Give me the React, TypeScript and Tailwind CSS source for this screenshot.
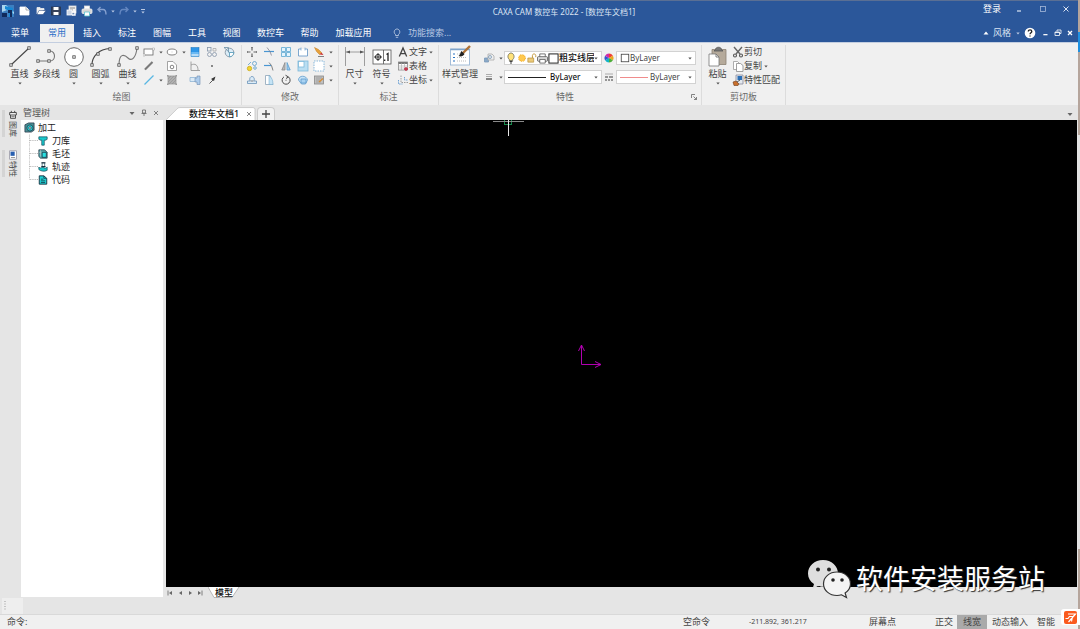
import React from 'react';

type Kids = { children?: React.ReactNode };

function Icon({ children, size = 'size-3', box = '0 0 12 12' }: Kids & { size?: string; box?: string }) {
  return (
    <svg viewBox={box} className={`${size} shrink-0`} fill="none" stroke="#666" strokeWidth="0.8" aria-hidden="true">
      {children}
    </svg>
  );
}

function Caret({ light = false }: { light?: boolean }) {
  return (
    <svg viewBox="0 0 4 3" className="h-[3px] w-1 shrink-0" fill={light ? '#b9c8e2' : '#555'} aria-hidden="true">
      <path d="M0.3 0.5h3.4L2 2.6z" />
    </svg>
  );
}

function Node({ x, y }: { x: number; y: number }) {
  return <rect x={x - 1.2} y={y - 1.2} width="2.4" height="2.4" fill="#fff" stroke="#444" strokeWidth="0.8" />;
}

function Group({ title, width, children, launcher = false }: Kids & { title: string; width: string; launcher?: boolean }) {
  return (
    <section aria-label={title} className={`${width} flex shrink-0 flex-col border-r border-[#dcdcdc]`}>
      <div className="flex h-[46px] items-start">{children}</div>
      <div className="flex h-3 items-center">
        <h2 className="flex-1 text-center text-[9px] leading-3 text-[#6a6a6a]">{title}</h2>
        {launcher && (
          <button aria-label="特性设置" className="mr-1">
            <Icon size="size-[6px]" box="0 0 6 6">
              <path d="M0.5 4V0.5H4M2.5 2.5l3 3M5.5 3v2.5H3" />
            </Icon>
          </button>
        )}
      </div>
    </section>
  );
}

function BigTool({ label, children, caret = true, width = 'w-[27px]' }: Kids & { label: string; caret?: boolean; width?: string }) {
  return (
    <button className={`${width} flex shrink-0 flex-col items-center whitespace-nowrap`}>
      <Icon size="size-[22px]" box="0 0 22 22">{children}</Icon>
      <span className="text-[9px] leading-[14px] text-[#444]">{label}</span>
      <span className="flex h-[5px] items-center">{caret && <Caret />}</span>
    </button>
  );
}

function SmallTool({ label, children, caret = false }: Kids & { label: string; caret?: boolean }) {
  return (
    <button aria-label={label} className="flex h-[14px] items-center gap-1">
      <Icon>{children}</Icon>
      {caret && <Caret />}
    </button>
  );
}

function TextTool({ label, children, caret = false }: Kids & { label: string; caret?: boolean }) {
  return (
    <button className="flex h-[14px] items-center whitespace-nowrap text-[9px] leading-[14px] text-[#444]">
      <Icon>{children}</Icon>
      <span>{label}</span>
      {caret && <span className="ml-[2px] flex"><Caret /></span>}
    </button>
  );
}

function Combo({ label, value, children, bold = false, latin = false, width }: Kids & { label: string; value: string; bold?: boolean; latin?: boolean; width: string }) {
  return (
    <div className={`${width} flex h-[14px] shrink-0 items-center border border-[#d2d2d2] bg-white pr-[3px]`}>
      {children}
      <select
        aria-label={label}
        className={`min-w-0 flex-1 appearance-none bg-transparent leading-3 outline-none ${latin ? 'text-[8px]' : 'text-[9px]'} ${bold ? 'font-medium text-[#111]' : 'text-[#444]'}`}
      >
        <option>{value}</option>
      </select>
      <Caret />
    </div>
  );
}

function TitleBar() {
  return (
    <header className="flex h-6 items-center border-t border-[#5a6f94] px-[2px] pb-[3px]">
      <svg viewBox="0 0 12 12" className="size-3" aria-hidden="true">
        <rect width="12" height="12" fill="#3d7fc0" />
        <path d="M0 0h4l8 7v2L5 5 0 7z" fill="#a9d6ef" />
        <path d="M3 1l8 2-1 9H7V6L3 4z" fill="#1688d4" />
        <path d="M6 5h4v7H8V8H6zM0 8h5v4H0z" fill="#102a5c" />
      </svg>
      <div className="ml-[5px] flex items-center gap-[3px]">
        <button aria-label="新建"><Icon><path d="M1 2h6l3 3v5H1z" fill="#fff" stroke="#fff" /><path d="M7 2v3h3" stroke="#999" /></Icon></button>
        <button aria-label="打开" className="ml-px"><Icon><path d="M2 9V2.5h3l1 1h3V5" fill="#eee" stroke="#eee" /><path d="M2 9.5l2-4h7l-3 4z" fill="#fff" stroke="#26457a" strokeWidth="0.5" /></Icon></button>
        <button aria-label="保存"><Icon><rect x="1.5" y="2" width="9" height="8" fill="#37435c" stroke="#26334d" /><path d="M3.5 2h5v3h-5zM3.5 7h5v3h-5z" fill="#fff" stroke="none" /></Icon></button>
        <button aria-label="另存为" className="ml-px"><Icon><rect x="3" y="1" width="7" height="7" fill="#f6f6f6" stroke="#ddd" /><path d="M4 3h5M4 5h3" /><rect x="1" y="5" width="5" height="5" fill="#cfd8e6" stroke="#fff" /><path d="M9 6v4H6" stroke="#fff" strokeWidth="1.4" /></Icon></button>
        <button aria-label="打印"><Icon><rect x="3.5" y="1" width="5" height="3" fill="#fff" stroke="#ddd" /><rect x="1" y="4" width="10" height="4.5" rx="1" fill="#d6d6d6" stroke="#eee" /><path d="M3.5 7h5v4h-5z" fill="#fff" stroke="#5ac2cf" /></Icon></button>
        <button className="flex items-center gap-[3px]" aria-label="撤销"><Icon><path d="M4.5 2L2 4.5 4.5 7M2 4.5h5c3 0 3 3 3 5" stroke="#86a1d0" strokeWidth="1.4" /></Icon><Caret light /></button>
        <button className="flex items-center gap-[3px]" aria-label="重做"><Icon><path d="M7.5 2L10 4.5 7.5 7M10 4.5H5c-3 0-3 3-3 5" stroke="#6487c0" strokeWidth="1.4" /></Icon><Caret light /></button>
        <button className="ml-px flex flex-col items-center gap-px" aria-label="自定义快速访问工具栏"><span className="h-px w-1 bg-[#b9c8e2]" /><Caret light /></button>
      </div>
      <h1 className="flex-1 pt-[2px] text-center text-[8px] leading-3 whitespace-nowrap text-[#dbe4f3]">CAXA CAM 数控车 2022 - [数控车文档1]</h1>
      <div className="flex items-center pr-1 pb-1">
        <button className="mr-3 text-[9px] leading-3 text-white">登录</button>
        <button aria-label="最小化" className="mr-3"><Icon><path d="M4 8h4" stroke="#dbe4f3" strokeWidth="1.2" /></Icon></button>
        <button aria-label="最大化" className="mr-[11px]"><Icon><rect x="3.5" y="3.5" width="5" height="5" stroke="#a7bada" /></Icon></button>
        <button aria-label="关闭"><Icon><path d="M3.5 3.5l5 5M8.5 3.5l-5 5" stroke="#dbe4f3" strokeWidth="1" /></Icon></button>
      </div>
    </header>
  );
}

function MenuTab({ label, width }: { label: string; width: string }) {
  return <button className={`${width} h-full shrink-0 text-center leading-[18px] whitespace-nowrap`}>{label}</button>;
}

function MenuBar() {
  return (
    <nav className="flex h-[18px] items-center text-[9px] text-white">
      <MenuTab label="菜单" width="w-10" />
      <button aria-current="page" className="h-full w-[34px] shrink-0 bg-[#f0f0f0] leading-[18px] text-[#2b6fc8]">常用</button>
      <MenuTab label="插入" width="w-9" />
      <MenuTab label="标注" width="w-[34px]" />
      <MenuTab label="图幅" width="w-9" />
      <MenuTab label="工具" width="w-[34px]" />
      <MenuTab label="视图" width="w-[35px]" />
      <MenuTab label="数控车" width="w-[43px]" />
      <MenuTab label="帮助" width="w-[35px]" />
      <MenuTab label="加载应用" width="w-[53px]" />
      <label className="ml-[11px] flex min-w-0 flex-1 items-center gap-[5px]">
        <Icon><path d="M4.5 8.5V7.5C2 5.5 3.5 2 6 2s4 3.5 1.500 5.500v1zM4.800 10.300h2.400" stroke="#c6d3e8" strokeWidth="0.8" /></Icon>
        <input aria-label="功能搜索" placeholder="功能搜索..." className="min-w-0 flex-1 bg-transparent leading-3 outline-none placeholder:text-[#b8c8e2]" />
      </label>
      <div className="flex items-center gap-1 pr-1">
        <button aria-label="折叠功能区"><Icon size="size-[6px]" box="0 0 6 6"><path d="M0.5 4.5L3 1.5l2.5 3z" fill="#fff" stroke="none" /></Icon></button>
        <button className="flex items-center gap-[5px] text-[#dbe4f3]">风格<Caret light /></button>
        <button aria-label="帮助">
          <svg viewBox="0 0 12 12" className="size-3" aria-hidden="true"><circle cx="6" cy="6" r="5.3" fill="#fff" /><path d="M4.300 4.600c0-2.400 3.500-2.200 3.500-.2C7.800 5.700 6 5.700 6 7.300M6 8.400v1.200" fill="none" stroke="#222" strokeWidth="1.3" /></svg>
        </button>
        <button aria-label="最小化文档"><Icon size="size-[10px]"><path d="M4 8h5" stroke="#fff" strokeWidth="1.5" /></Icon></button>
        <button aria-label="还原文档"><Icon size="size-2" box="0 0 8 8"><path d="M3 2.500V1h4v3.500H5.500M1 3h4.500v3.500H1zM1 3.500h4.500" stroke="#fff" /></Icon></button>
        <button aria-label="关闭文档"><Icon size="size-2" box="0 0 8 8"><path d="M2 2l4 4M6 2L2 6" stroke="#fff" strokeWidth="1.3" /></Icon></button>
      </div>
    </nav>
  );
}

function Ribbon() {
  return (
    <div className="flex h-[63px] overflow-hidden border-t border-[#c3cee0] bg-[#f0f0f0] pt-[2px] pl-[2px]">
      <Group title="绘图" width="w-[240px]">
        <div className="ml-1 flex w-[137px] shrink-0">
          <BigTool label="直线"><path d="M2 20L20 3" stroke="#444" strokeWidth="1.1" /><Node x={2} y={20} /><Node x={20} y={3} /></BigTool>
          <BigTool label="多段线" caret={false}><path d="M2 16h12c6 0 6-10 0-10" stroke="#777" strokeWidth="1.1" /><Node x={2} y={16} /><Node x={13} y={16} /><Node x={13} y={6} /></BigTool>
          <BigTool label="圆"><circle cx="11" cy="12" r="9.3" fill="#fff" stroke="#444" /><Node x={11} y={12} /></BigTool>
          <BigTool label="圆弧"><path d="M2 20C2 11 9 4 20 3.500" stroke="#444" strokeWidth="1.1" /><Node x={2} y={20} /><Node x={8} y={9} /><Node x={20} y={4} /></BigTool>
          <BigTool label="曲线"><path d="M2 20C2 7 8 10 11 13c4 4 8-1 9-10" stroke="#777" strokeWidth="1.1" /><Node x={2} y={20} /><Node x={20} y={3} /></BigTool>
        </div>
        <div className="grid shrink-0 grid-cols-[23px_23px_17px_17px_17px]">
          <SmallTool label="矩形" caret><rect x="1" y="3" width="9" height="6" fill="#fff" /><path d="M9.500 2h2v2h-2zM0 8h2v2H0z" fill="#fff" stroke="#999" strokeWidth="0.5" /></SmallTool>
          <SmallTool label="椭圆" caret><ellipse cx="6" cy="6" rx="4.8" ry="3" fill="#fff" /><path d="M6 5.500v1" stroke="#bbb" /></SmallTool>
          <SmallTool label="渐变填充"><rect x="2" y="1.500" width="8" height="9" fill="#2f97e8" stroke="#1670b8" strokeWidth="0.5" /><path d="M2.300 8h7.400v2.200H2.300z" fill="#b5dcf8" stroke="none" /><path d="M2.300 6h7.400v2H2.300z" fill="#6cb9f2" stroke="none" /></SmallTool>
          <SmallTool label="图库"><rect x="1.500" y="1.500" width="3.500" height="3.500" stroke="#8696aa" /><circle cx="3.500" cy="8.500" r="2" stroke="#8696aa" /><circle cx="8.500" cy="8.500" r="2" stroke="#8696aa" /><path d="M7 5V2.500h3V5z" stroke="#aaa" /></SmallTool>
          <SmallTool label="剖视图"><circle cx="6.500" cy="6.500" r="4.3" fill="#dcedf7" stroke="#7a8a9a" /><path d="M6.500 6.500h4.300a4.300 4.300 0 0 1-4.300 4.300z" fill="#fff" stroke="#4a95b6" /><path d="M1 1.500h4.500v5M1 1.500l5.500 5" stroke="#6a8fa6" /></SmallTool>
          <SmallTool label="双线"><path d="M2 9.500L9.500 2" stroke="#6a6a6a" strokeWidth="2" /><path d="M1.500 10l8-8" stroke="#aaa" strokeWidth="0.5" /></SmallTool>
          <SmallTool label="正多边形"><path d="M1.500 10.500v-9H7L10.500 5v5.500z" fill="#fff" stroke="#8d8d8d" /><circle cx="6" cy="7" r="1.8" /></SmallTool>
          <SmallTool label="公式曲线"><path d="M2 1.500v9h9M2 5c4-2 7 0 7 5" stroke="#8d8d8d" /></SmallTool>
          <SmallTool label="点"><circle cx="6" cy="6" r="0.9" fill="#555" stroke="none" /></SmallTool>
          <span />
          <SmallTool label="构造线" caret><path d="M1.500 10.500l9-9" stroke="#58b7e3" strokeWidth="1.2" /></SmallTool>
          <SmallTool label="剖面线"><rect x="2" y="2" width="8" height="8" fill="#b0b0b0" stroke="#999" /><path d="M2 5l3-3M2 8l6-6M3 10l7-7M6 10l4-4" stroke="#888" strokeWidth="0.5" /><path d="M1 1h1.500v1.500H1zM9.500 1H11v1.500H9.500zM1 9.500h1.500V11H1zM9.500 9.500H11V11H9.500z" fill="#999" stroke="none" /></SmallTool>
          <SmallTool label="局部放大"><path d="M1 3.500h6v4H1z" fill="#dbeaf6" stroke="#8fb4d4" /><path d="M6 4h2V2h3v8.500H8V8H6z" fill="#aecded" stroke="#6d8cae" strokeWidth="0.6" /></SmallTool>
          <SmallTool label="箭头"><path d="M3.500 9.500l4-4" stroke="#333" /><path d="M5 5l4.500-2.500L8 7z" fill="#333" stroke="none" /></SmallTool>
        </div>
      </Group>

      <Group title="修改" width="w-[97px]">
        <div className="ml-1 grid shrink-0 grid-cols-[17px_17px_17px_16px_22px]">
          <SmallTool label="平移"><path d="M6 1v3.500M6 7.500V11M1 6h3.500M7.500 6H11" stroke="#666" strokeWidth="1.2" /><path d="M5 2l1-1 1 1M5 10l1 1 1-1M2 5L1 6l1 1M10 5l1 1-1 1" stroke="#777" /></SmallTool>
          <SmallTool label="裁剪"><path d="M1 5.500h10" stroke="#4a96d2" strokeWidth="1.2" /><path d="M4 1.500l3 4 1.500 4" stroke="#778" strokeWidth="0.7" /></SmallTool>
          <SmallTool label="阵列"><path d="M1.500 1.500h4v4h-4zM6.500 1.500h4v4h-4zM1.500 6.500h4v4h-4zM6.500 6.500h4v4h-4z" fill="#e4f4fd" stroke="#5ba7d1" /></SmallTool>
          <SmallTool label="打断"><path d="M1.500 3v7h9V3" fill="#fff" stroke="#5f93c4" /><path d="M1.500 3h2.500M8 3h2.500" stroke="#5f93c4" /><path d="M4 1.500v3M8 1.500v3" stroke="#7aa8d2" /></SmallTool>
          <SmallTool label="删除" caret><path d="M1.500 1.500l4 2 3 3-2 2-3-3z" fill="#e7a13a" stroke="#bf7b20" strokeWidth="0.5" /><path d="M6.500 8.500l2-2 2 2.500z" fill="#c33" stroke="none" /><path d="M5 10.500h6" /></SmallTool>
          <SmallTool label="复制"><circle cx="3.500" cy="8.500" r="2.2" fill="#f3d433" stroke="#c9a91d" /><circle cx="8.500" cy="3.500" r="2" stroke="#5b9cca" /><circle cx="9" cy="8" r="1.3" stroke="#5b9cca" /><path d="M2 5l3-3" stroke="#5b9cca" /></SmallTool>
          <SmallTool label="延伸"><path d="M1 5.500h7" stroke="#4a96d2" strokeWidth="1.2" /><path d="M6 2.500l2.500 3 1.500 5" /></SmallTool>
          <SmallTool label="镜像"><path d="M5 2.500v7.500H1.800z" fill="#bbb" stroke="#888" /><path d="M7 2.500v7.500h3.200z" fill="#9dccf0" stroke="#5b9cca" /></SmallTool>
          <SmallTool label="缩放"><rect x="1" y="1" width="10" height="10" fill="#b9def2" stroke="#7db8da" /><rect x="1.500" y="1.500" width="5.500" height="5.500" fill="#fff" stroke="#7db8da" /></SmallTool>
          <SmallTool label="拉伸" caret><rect x="1" y="1" width="10" height="10" fill="#fff" stroke="#6da7d2" strokeDasharray="1.5 1" /></SmallTool>
          <SmallTool label="等距"><path d="M1.500 9.500h9V7H8c2-6-6-6-4 0H1.500z" fill="#dcecf8" stroke="#6a93b7" /><path d="M4.500 7h3" /></SmallTool>
          <SmallTool label="倒角"><path d="M2.500 10.500v-9H7l3 9z" fill="#fff" stroke="#8ba3b7" /><path d="M6 1.500c3 2 4 5 4 9H6z" fill="#c4e3f5" stroke="#6da7c9" strokeWidth="0.5" /></SmallTool>
          <SmallTool label="旋转"><path d="M4 2.800a4 4 0 1 0 4.500.2M8.500 3L5.500 1.200M8.500 3L6 4.500" stroke="#4a4a4a" strokeWidth="1" /><circle cx="6" cy="6.300" r="0.7" fill="#888" stroke="none" /></SmallTool>
          <SmallTool label="打散"><path d="M1.500 6c0-5 8-5 9 0l-2 4h-4z" fill="#c6e3f7" stroke="#5e9bcb" /><path d="M4 5h5v4H4z" fill="#a8d2f2" stroke="#5e9bcb" /></SmallTool>
          <SmallTool label="编辑" caret><rect x="1.500" y="2" width="9" height="8" fill="#c0c0c0" stroke="#888" /><path d="M3 4h6M3 6h4M3 8h5" stroke="#999" /><path d="M6 8l4-3.500" stroke="#d58c35" strokeWidth="1.4" /></SmallTool>
        </div>
      </Group>

      <Group title="标注" width="w-[100px]">
        <div className="ml-[2px] flex shrink-0">
          <BigTool label="尺寸"><path d="M1.500 2v19M20.500 2v19M1.500 7h19" stroke="#888" /><path d="M2 7l4-1.500v3zM20 7l-4-1.500v3z" fill="#555" stroke="none" /></BigTool>
          <BigTool label="符号"><rect x="2" y="5" width="18" height="14" fill="#fff" stroke="#555" /><path d="M12.500 5v14" stroke="#555" /><circle cx="7" cy="12" r="2.6" stroke="#222" strokeWidth="0.9" /><path d="M3 12h8M7 8v8" stroke="#222" strokeWidth="0.9" /><path d="M15.500 9.500l1.500-1v7.500M13.700 14.500v1.500" stroke="#222" strokeWidth="1.3" /></BigTool>
        </div>
        <div className="ml-[2px] flex flex-col">
          <TextTool label="文字" caret><path d="M2.300 10.500L6 2l3.700 8.500M3.600 7.700h4.800" stroke="#444" strokeWidth="1.3" /></TextTool>
          <TextTool label="表格"><rect x="1.500" y="2" width="9" height="8" fill="#fff" stroke="#888" /><path d="M1.500 3h9" stroke="#777" strokeWidth="2" /><path d="M1.500 6h9M1.500 8h9M4.500 3v7M7.500 3v7" stroke="#aaa" strokeWidth="0.6" /><path d="M9 7v4M7 9h4" stroke="#c22a43" strokeWidth="1.3" /></TextTool>
          <TextTool label="坐标" caret><path d="M4 1.500v7h7" stroke="#888" strokeDasharray="1.5 1" /><path d="M1.500 6v4h4M7.500 3v3h3" stroke="#4b8dcc" strokeDasharray="1.5 0.8" /></TextTool>
        </div>
      </Group>

      <Group title="特性" width="w-[263px]" launcher>
        <BigTool label="样式管理" width="w-[42px]"><rect x="1.500" y="4" width="19" height="16" fill="#fff" stroke="#8fafd0" /><path d="M1.500 4.500h19" stroke="#7da3ca" strokeWidth="1.5" /><path d="M4 9h2M4 12.500h2M4 16h2" stroke="#2873c4" strokeWidth="1.2" /><path d="M8 9h6M8 12.500h9M8 16h9" stroke="#aaa" strokeDasharray="1 1" /><path d="M21 1l-7 7" stroke="#ad7136" strokeWidth="2.4" /><path d="M12.500 6l3 3c-1 2-3.500 3-6 2 2-1 1.500-3.500 3-5z" fill="#222" stroke="none" /></BigTool>
        <div className="ml-[2px] flex flex-col gap-[5px] pt-[6px]">
          <div className="flex items-center gap-px">
            <SmallTool label="图层" caret><path d="M1.500 6h4v4h-4z" fill="#8aa9c8" stroke="#7998b7" /><path d="M5 8V2h4l2 2v4z" fill="#eee" stroke="#aaa" /><circle cx="7" cy="5" r="1.5" stroke="#7998b7" /></SmallTool>
            <Combo label="当前图层" value="粗实线层" width="w-[98px]" bold>
              <Icon><path d="M4.300 7.500C1.500 5 3.500 1 6 1s4.500 4 1.700 6.500v1H4.300z" fill="#ffe27a" stroke="#665" /><path d="M4.500 9.500h3M5 11h2" stroke="#444" strokeWidth="1.2" /></Icon>
              <Icon size="size-[10px]"><circle cx="6" cy="6" r="4" fill="#ffc94f" stroke="#f1ab24" strokeDasharray="1 1" strokeWidth="1.3" /></Icon>
              <Icon size="size-[10px]"><path d="M1 6h7v5H1z" fill="#ecca79" stroke="#b28d38" /><path d="M6.500 6V3c0-2.500 4-2.500 4 0v2" stroke="#c49a40" strokeWidth="1.2" /></Icon>
              <Icon size="size-[11px]"><path d="M3 4V1h6v3" fill="#fff" stroke="#444" /><rect x="0.500" y="4" width="11" height="5" rx="1" fill="#ddd" stroke="#444" /><path d="M3 7h6v4H3z" fill="#fff" stroke="#444" /></Icon>
              <Icon size="size-[11px]"><rect x="1" y="1" width="10" height="10" fill="#fff" stroke="#222" strokeWidth="1.1" /></Icon>
            </Combo>
            <button aria-label="颜色" className="flex w-3 justify-center">
              <svg viewBox="0 0 10 10" className="size-[10px]" aria-hidden="true">
                <path d="M5 5V.5A4.500 4.500 0 0 1 8.900 2.750z" fill="#ef4136" /><path d="M5 5L8.900 2.750a4.500 4.500 0 0 1 0 4.500z" fill="#e9a81e" /><path d="M5 5l3.900 2.250A4.500 4.500 0 0 1 5 9.500z" fill="#4dae39" /><path d="M5 5v4.500a4.500 4.500 0 0 1-3.900-2.250z" fill="#12b4c8" /><path d="M5 5L1.100 7.250a4.500 4.500 0 0 1 0-4.500z" fill="#3255cf" /><path d="M5 5L1.100 2.750A4.500 4.500 0 0 1 5 .5z" fill="#d22ba8" />
              </svg>
            </button>
            <Combo label="对象颜色" value="ByLayer" width="w-[80px]" latin><span className="ml-[3px] flex"><Icon size="size-[10px]"><rect x="1.500" y="1.500" width="9" height="9" fill="#fff" stroke="#444" strokeWidth="1" /></Icon></span></Combo>
          </div>
          <div className="flex items-center gap-px">
            <SmallTool label="线宽" caret><path d="M3 3.500h6M3 5.500h6" stroke="#999" /><path d="M3 8h6" stroke="#777" strokeWidth="1.8" /></SmallTool>
            <Combo label="对象线型" value="ByLayer" width="w-[98px]" bold latin>
              <svg viewBox="0 0 38 4" className="mr-1 ml-[3px] h-1 w-[38px] shrink-0" aria-hidden="true"><path d="M0 2.500h38" stroke="#222" strokeWidth="1" /></svg>
            </Combo>
            <button aria-label="线型"><Icon><path d="M2 3h8" stroke="#999" /><path d="M2 6h3M6 6h4" stroke="#777" strokeWidth="1.5" /><path d="M2 9h2M5 9h2M8 9h2" stroke="#777" strokeWidth="1.5" /></Icon></button>
            <Combo label="对象线宽" value="ByLayer" width="w-[80px]" latin>
              <svg viewBox="0 0 28 4" className="mr-[2px] ml-[3px] h-1 w-7 shrink-0" aria-hidden="true"><path d="M0 2.500h28" stroke="#f08c8c" strokeWidth="1" /></svg>
            </Combo>
          </div>
        </div>
      </Group>

      <Group title="剪切板" width="w-[84px]">
        <div className="ml-[2px] flex">
          <BigTool label="粘贴"><path d="M5 4.500h14v15H5z" fill="#b5aa9b" stroke="#8c8174" /><path d="M8.500 4.500c0-3 6-3 6 0l1.500 1.500H7z" fill="#777" stroke="#555" /><path d="M2 9h7l3 3v9H2z" fill="#fff" stroke="#777" /><path d="M9 9v3h3" /></BigTool>
        </div>
        <div className="ml-px flex flex-col">
          <TextTool label="剪切"><path d="M2 1l6 7M10 1L4 8" stroke="#666" strokeWidth="1.4" /><circle cx="3" cy="9.500" r="1.5" stroke="#555" strokeWidth="1.1" /><circle cx="9" cy="9.500" r="1.5" stroke="#555" strokeWidth="1.1" /></TextTool>
          <TextTool label="复制" caret><path d="M1.500 1.500h4l2 2v6h-6z" fill="#fff" stroke="#999" /><path d="M4.500 3.500h4l2.500 2v6H4.500z" fill="#fff" stroke="#888" /></TextTool>
          <TextTool label="特性匹配"><path d="M4 1h7v9H4z" fill="#e2e8ee" stroke="#889" /><rect x="5.500" y="2" width="4.500" height="4" fill="#2c6fb5" stroke="none" /><path d="M1 8l3-1 3 3-1 1.500H2z" fill="#c86f2c" stroke="#6f3c1c" strokeWidth="0.6" /><path d="M5 8l3-2" stroke="#333" /></TextTool>
        </div>
      </Group>
    </div>
  );
}

function SideTab({ label, children }: Kids & { label: string }) {
  return (
    <button className="flex w-full flex-col items-center gap-px border-l-[3px] border-[#d4d4d4] pr-[2px] pl-px">
      <Icon size="size-[10px]">{children}</Icon>
      <span className="text-[8px] leading-3 text-[#444] [text-orientation:sideways] [writing-mode:vertical-rl]">{label}</span>
    </button>
  );
}

function TreeItem({ label, children, last = false }: Kids & { label: string; last?: boolean }) {
  return (
    <li className="flex h-[13px] items-center">
      <svg viewBox="0 0 10 13" className="h-[13px] w-[9px]" fill="none" stroke="#aaa" strokeDasharray="1 1" aria-hidden="true">
        <path d={last ? 'M0.5 0v6.5' : 'M0.5 0v13'} /><path d="M1 6.5h9" />
      </svg>
      <Icon size="size-[10px]">{children}</Icon>
      <span className="ml-1">{label}</span>
    </li>
  );
}

function TreePanel() {
  return (
    <aside className="flex w-[142px] shrink-0 flex-col pb-px">
      <div className="flex h-[14px] items-center gap-1 pr-[3px] pl-[2px] text-[9px] leading-3 text-[#555]">
        <h2 className="flex-1">管理树</h2>
        <button aria-label="面板选项"><Icon size="size-2" box="0 0 8 8"><path d="M1.500 3h5L4 6z" fill="#666" stroke="none" /></Icon></button>
        <button aria-label="固定面板"><Icon size="size-2" box="0 0 8 8"><path d="M2.500 1h3v3h-3zM1.500 4.500h5M4 4.500V7" /></Icon></button>
        <button aria-label="关闭面板"><Icon size="size-2" box="0 0 8 8"><path d="M2 2l4 4M6 2L2 6" /></Icon></button>
      </div>
      <div className="flex-1 bg-white pt-px pl-[3px] text-[9px] leading-[13px] text-[#222]">
        <div className="flex h-[13px] items-center gap-[3px]">
          <Icon size="size-[11px]"><path d="M1 3l4-2h6v8l-3 2H1z" fill="#4b8f94" stroke="#234" /><circle cx="6.500" cy="6.500" r="3.4" fill="#27cfd3" stroke="#234" /><circle cx="6.500" cy="6.500" r="1.3" fill="#fff" stroke="#234" /></Icon>
          <span>加工</span>
        </div>
        <ul className="pl-[5px]">
          <TreeItem label="刀库"><path d="M1 1h10v3l-2 1H7.500v6h-3V5H3L1 4z" fill="#19c9cc" stroke="#145" /></TreeItem>
          <TreeItem label="毛坯"><path d="M1 1h7l3 3v7H3L1 9z" fill="#5aa9ad" stroke="#123" /><path d="M5 4h5v6H5z" fill="#28e0e2" stroke="#123" /><path d="M3 1v8M1 4h3" stroke="#ccc" strokeWidth="0.6" /></TreeItem>
          <TreeItem label="轨迹"><path d="M5 1h3v5H5z" fill="#fff" stroke="#145" /><path d="M1 6c2 3 4-1 6 1 2 1 3 0 4-1v4c-3 2-8 1-10-1z" fill="#19c9cc" stroke="#145" /><path d="M4 1h5M4 5.500h5" stroke="#123" strokeWidth="1.2" /></TreeItem>
          <TreeItem label="代码" last><path d="M1.500 1H7l3.500 3v7h-9z" fill="#1fd0d3" stroke="#123" strokeWidth="1" /><path d="M3.500 5h3M3.500 7h5M3.500 9h5M7 1v3h3" stroke="#123" /></TreeItem>
        </ul>
      </div>
    </aside>
  );
}

function Drawing() {
  return (
    <main className="flex min-w-0 flex-1 flex-col pr-px">
      <div className="flex h-[14px] items-end pr-1">
        <div className="relative flex h-[13px] w-[91px] shrink-0 items-center">
          <svg viewBox="0 0 92 13" className="absolute inset-0 size-full" aria-hidden="true"><path d="M0 13L11 2q1-1.500 3-1.500h74q2 0 2 2V13" fill="#fff" stroke="#bbb" strokeWidth="0.7" /></svg>
          <button className="relative ml-[23px] flex-1 text-left text-[9px] leading-3 font-medium whitespace-nowrap text-[#111]">数控车文档1</button>
          <button aria-label="关闭文档标签" className="relative mr-[4px]"><Icon size="size-2" box="0 0 8 8"><path d="M2 2l4 4M6 2L2 6" /></Icon></button>
        </div>
        <button aria-label="新建文档" className="flex h-[13px] w-[18px] items-center justify-center rounded-t-sm border border-b-0 border-[#ccc] bg-[#f2f2f2]">
          <Icon size="size-[10px]" box="0 0 10 10"><path d="M5 1v8M1 5h8" stroke="#444" strokeWidth="1.3" /></Icon>
        </button>
        <span className="flex-1" />
        <button aria-label="文档列表" className="mb-[3px]"><Icon size="size-[6px]" box="0 0 6 6"><path d="M0.500 2h5L3 5z" fill="#666" stroke="none" /></Icon></button>
      </div>
      <div className="relative flex-1 overflow-hidden bg-black">
        <svg viewBox="0 0 32 17" className="absolute top-0 left-[326px] h-[17px] w-8" fill="none" aria-label="光标">
          <rect x="12.500" y="-2" width="7" height="6.500" stroke="#168a4c" /><path d="M1 1.500h31" stroke="#8a8a8a" /><path d="M16.500 0v16" stroke="#e8e8e8" />
        </svg>
        <svg viewBox="0 0 26 26" className="absolute top-[223px] left-[410px] size-[26px]" fill="none" stroke="#b000b0" aria-label="坐标原点">
          <path d="M5.500 2v19.500H25M2.500 8l3-6 3 6M19 18.500l6 3-6 3" />
        </svg>
      </div>
      <div className="flex h-[11px] items-start">
        <div className="flex items-center gap-[2px] pt-[2px]">
          <button aria-label="第一页"><Icon size="size-2" box="0 0 8 8"><path d="M2 1.500v5" /><path d="M6 2v4L3 4z" fill="#666" stroke="none" /></Icon></button>
          <button aria-label="上一页"><Icon size="size-2" box="0 0 8 8"><path d="M6 2v4L3 4z" fill="#666" stroke="none" /></Icon></button>
          <button aria-label="下一页"><Icon size="size-2" box="0 0 8 8"><path d="M3 2v4l3-2z" fill="#666" stroke="none" /></Icon></button>
          <button aria-label="最后一页"><Icon size="size-2" box="0 0 8 8"><path d="M6 1.500v5" /><path d="M2 2v4l3-2z" fill="#666" stroke="none" /></Icon></button>
        </div>
        <button className="relative ml-1 h-[11px] w-8 text-[9px] leading-[8px] font-medium text-[#111]">
          <svg viewBox="0 0 32 11" className="absolute inset-0 size-full" aria-hidden="true"><path d="M0 0l6 10.500h18L31 0" fill="#fff" stroke="#aaa" strokeWidth="0.8" /></svg>
          <span className="relative">模型</span>
        </button>
      </div>
    </main>
  );
}

function StatusBar() {
  return (
    <footer className="flex h-[15px] items-center border-t border-[#d9d9d9] bg-[#f0f0f0] pr-[19px] pl-[7px] text-[9px] leading-[14px] whitespace-nowrap text-[#444]">
      <label className="flex min-w-0 flex-1 items-center">
        命令:
        <input aria-label="命令" className="min-w-0 flex-1 bg-transparent outline-none" />
      </label>
      <span className="w-[66px]">空命令</span>
      <span className="w-[120px] text-[7px]">-211.892, 361.217</span>
      <span className="w-[62px]">屏幕点</span>
      <button className="px-1">正交</button>
      <button aria-pressed="true" className="bg-[#aaaaaa] px-[6px]">线宽</button>
      <button className="ml-px px-1">动态输入</button>
      <button className="ml-px px-1">智能</button>
    </footer>
  );
}

function DesktopEdge() {
  return (
    <div className="flex w-[2px] shrink-0 flex-col bg-[#b5a59c]" aria-hidden="true">
      <div className="mt-8 h-5 bg-[#1e90e0]" />
      <div className="mt-[83px] mb-20 flex-1 bg-[#e2e2e2]" />
    </div>
  );
}

export default function App() {
  return (
    <div lang="zh-CN" className="relative flex min-h-screen bg-[#e5e5e5] font-['Noto_Sans','Noto_Sans_CJK_SC',sans-serif]">
      <div className="flex min-w-0 flex-1 flex-col">
        <div className="bg-[#2b579a]">
          <TitleBar />
          <MenuBar />
        </div>
        <Ribbon />
        <div className="flex flex-1 pt-px">
          <div className="flex w-[21px] shrink-0 flex-col gap-[13px] pt-1 pl-[2px]">
            <SideTab label="图库"><path d="M2 3h8v3H2zM4 1v2M8 1v2M3 6v4h6V6" fill="#eee" stroke="#444" strokeWidth="1.1" /><path d="M4 8h4" stroke="#444" /></SideTab>
            <SideTab label="特性"><rect x="2" y="1" width="8" height="10" fill="#fff" stroke="#889" /><rect x="3" y="2" width="5" height="5" fill="#285fb0" stroke="none" /><path d="M3.500 9h5" /></SideTab>
          </div>
          <TreePanel />
          <div className="w-[3px] shrink-0" />
          <Drawing />
        </div>
        <div className="flex h-4 items-center pl-[2px]">
          <div className="flex h-full w-[21px] items-center bg-[#eeeeee] pl-[2px]">
            <svg viewBox="0 0 2 10" className="h-[10px] w-[2px]" aria-hidden="true"><path d="M1 0v10" stroke="#999" strokeDasharray="1 1.5" /></svg>
          </div>
        </div>
        <StatusBar />
      </div>
      <DesktopEdge />

      <div className="pointer-events-none absolute right-[35px] bottom-[30px] flex items-center gap-[5px]">
        <svg viewBox="0 0 44 40" className="h-10 w-11" aria-hidden="true">
          <path d="M16 1C7.500 1 1 7 1 14.500c0 4.500 2.300 8 6 10.500l-1.500 5 5.500-3c2 .6 3.300.8 5 .8 8.500 0 15-6 15-13.300S24.500 1 16 1z" fill="#dedede" />
          <circle cx="11" cy="10.500" r="2" fill="#222" /><circle cx="22" cy="10.500" r="2" fill="#222" />
          <path d="M30 13c-7.500 0-13.500 5-13.500 11.700S22.500 36.500 30 36.500c1.600 0 3-.2 4.500-.7l5 2.700-1.400-4.500c3.200-2.200 5.400-5.400 5.400-9.300C43.500 18 37.500 13 30 13z" fill="#f4f4f4" stroke="#333" strokeWidth="1.2" />
          <circle cx="26" cy="21" r="1.8" fill="#222" /><circle cx="35" cy="21" r="1.8" fill="#222" />
        </svg>
        <span className="text-[27px] leading-10 whitespace-nowrap text-white [text-shadow:1px_1px_1px_#333]">软件安装服务站</span>
      </div>
      <button aria-label="输入法" className="absolute right-0 bottom-1 flex h-4 w-[19px] items-center justify-center rounded-l-[3px] bg-white">
        <svg viewBox="0 0 13 13" className="size-[13px]" aria-hidden="true"><rect width="13" height="13" rx="2" fill="#fa5a1e" /><path d="M4 3h7.500L9.500 5.500M11 3.500L4.500 11M1.500 7.500h2.500l1.500-2h3l-1 5" fill="none" stroke="#fff" strokeWidth="1.2" /></svg>
      </button>
    </div>
  );
}
